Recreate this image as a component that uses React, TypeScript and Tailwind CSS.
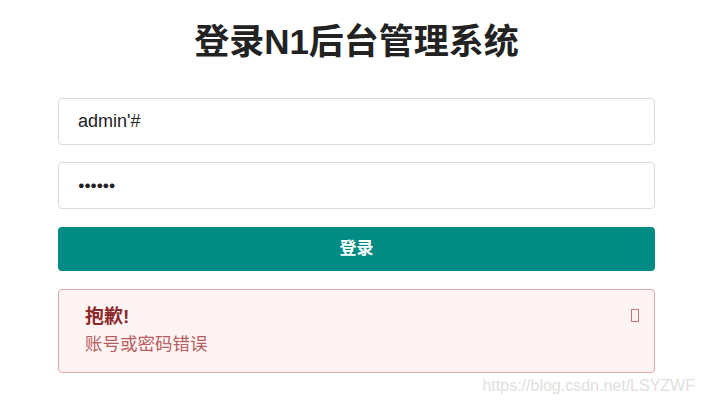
import React from 'react'

const font = { fontFamily: '"Liberation Sans", Arial, "Noto Sans CJK SC", sans-serif' }

export default function App() {
  return (
    <div className="relative w-[704px] h-[403px] bg-white overflow-hidden" style={font}>
      <div className="ml-[58px] w-[597px] flex flex-col">
        <h1 className="mt-[20px] h-[44px] leading-[44px] text-center text-[35px] font-bold text-[#222]">
          登录N1后台管理系统
        </h1>

        <div className="mt-[34px] h-[47px] rounded-[4px] border border-[#dadada] flex items-center px-[19px] text-[18px] text-[#222]">
          admin'#
        </div>

        <div className="mt-[17px] h-[47px] rounded-[4px] border border-[#dadada] flex items-center px-[19px] text-[#222]">
          <span className="tracking-[-0.5px] text-[11px]">●●●●●●</span>
        </div>

        <button className="mt-[18px] h-[44px] rounded-[4px] bg-[#008b84] text-white text-[17px] font-bold">
          登录
        </button>

        <div className="mt-[18px] h-[84px] rounded-[4px] border border-[#e2a8a8] bg-[#fff4f4] relative px-[26px] pt-[13px]">
          <div className="text-[19px] font-bold text-[#8b2a2a] leading-[27px]">抱歉!</div>
          <div className="text-[17.5px] text-[#b5605f] leading-[27px] mt-[1px]">账号或密码错误</div>
          <span className="absolute right-[15px] top-[19px] w-[8px] h-[13px] border border-[#c77474]" />
        </div>
      </div>

      <div className="absolute right-[9px] top-[374px] text-[16px] text-[#e0e0e0]">
        https://blog.csdn.net/LSYZWF
      </div>
    </div>
  )
}
